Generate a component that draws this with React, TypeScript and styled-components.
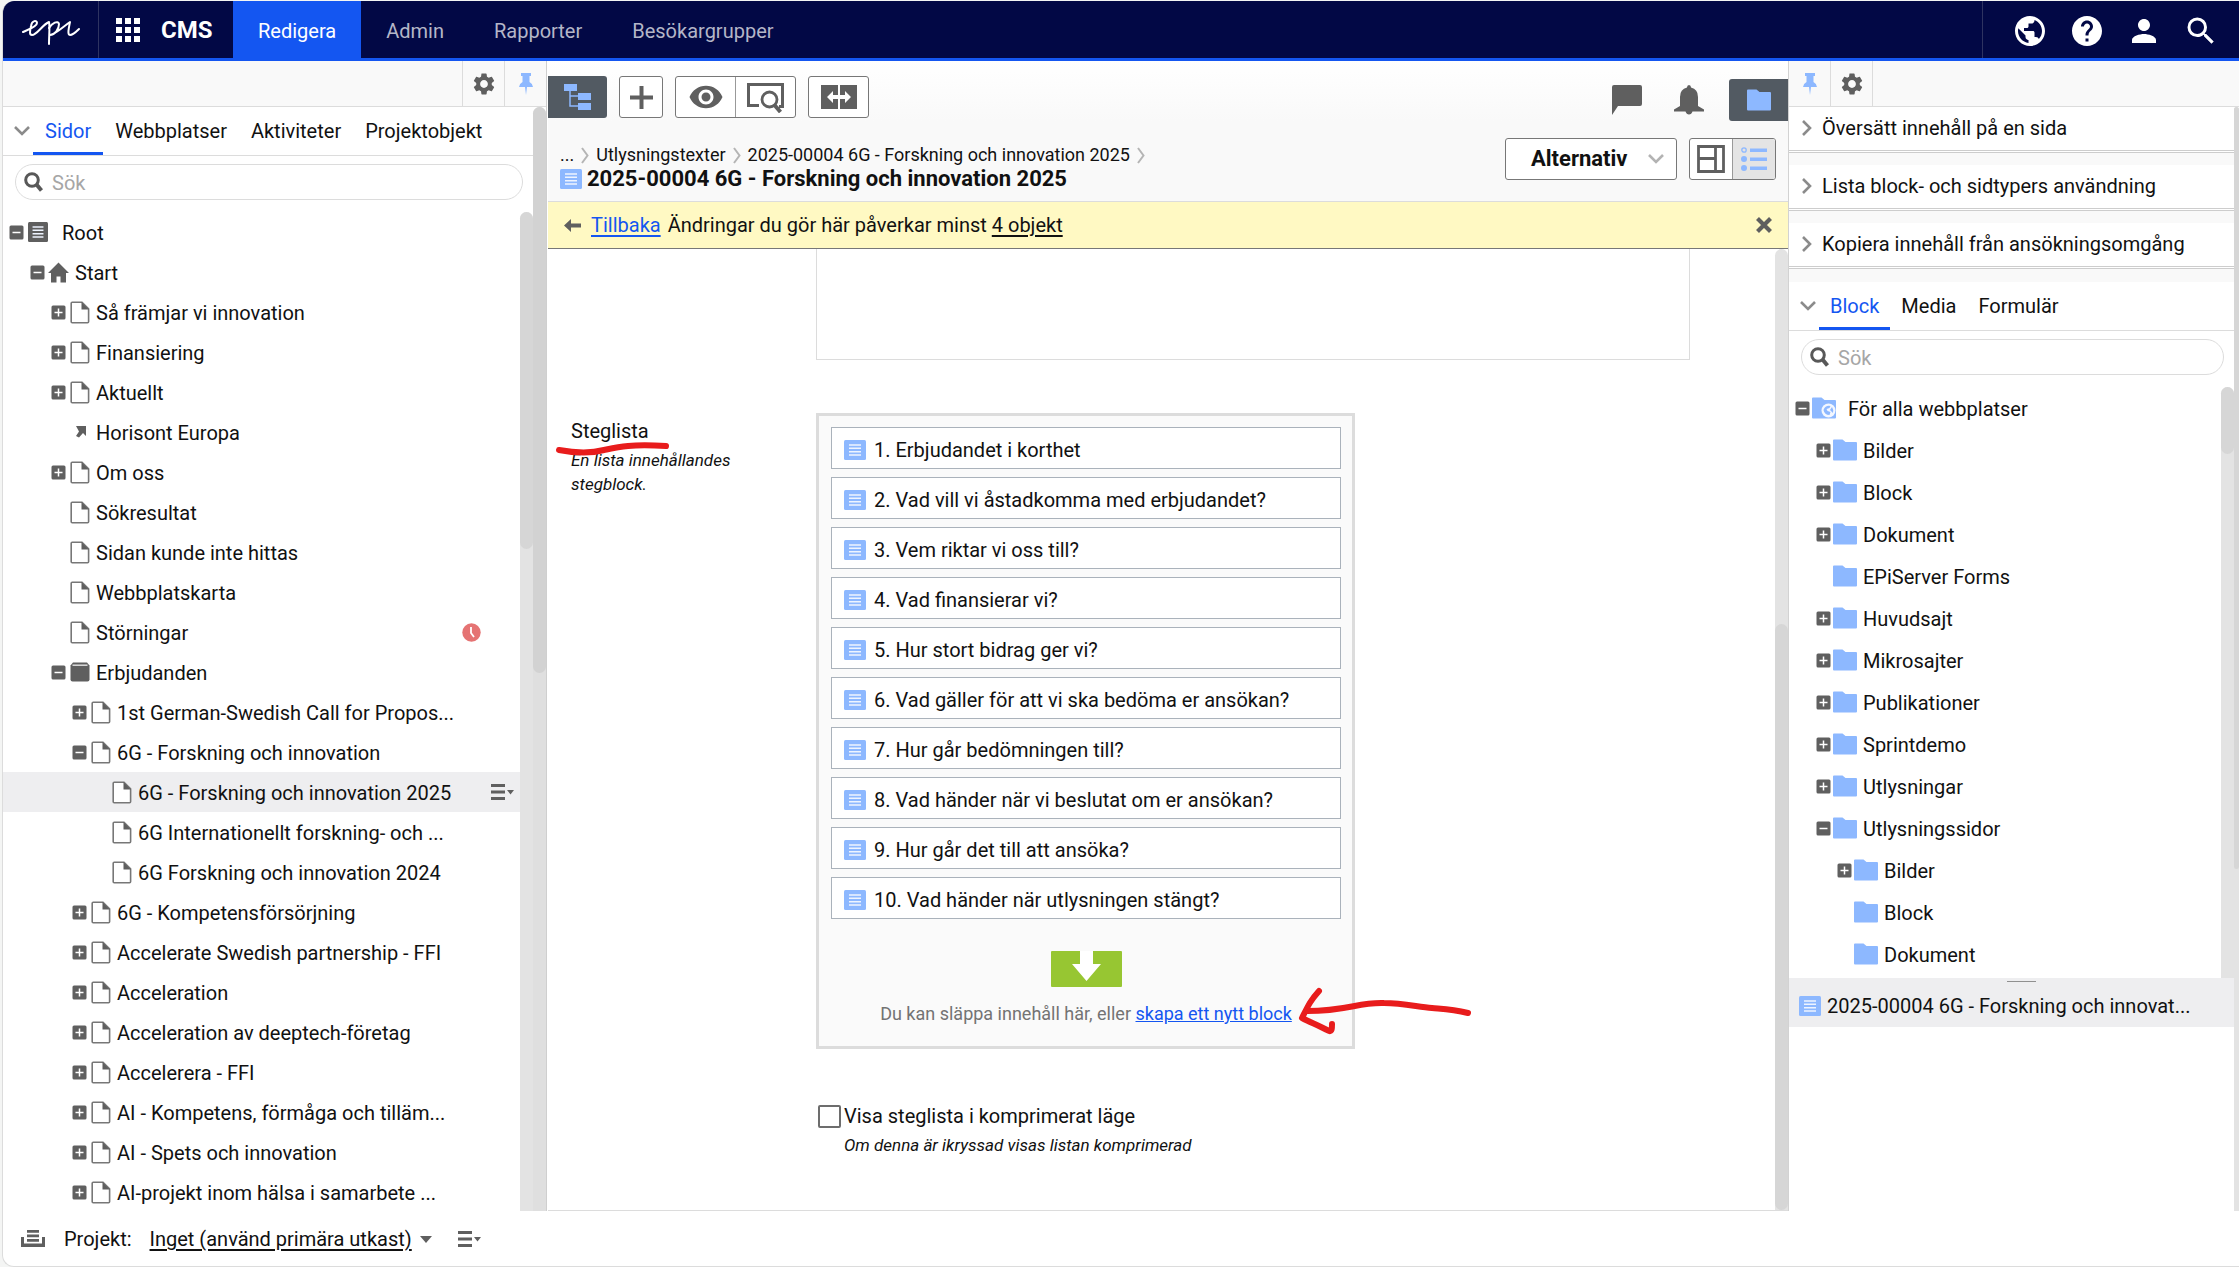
import React from "react";
import styled, { createGlobalStyle } from "styled-components";
import { MdApps, MdHelp, MdPerson, MdPublic, MdSearch, MdSettings, MdVisibility } from "react-icons/md";

const color = {
  navy: "#020845",
  blue: "#1456f1",
  sky: "#8db8ff",
  icon: "#5f5f5f",
  line: "#dcdcdc",
  slate: "#525a62",
  panel: "#f9f9f9",
  track: "#e3e3e3",
  thumb: "#d6d6d6",
  ink: "#e81c1c",
};

const GlobalStyle = createGlobalStyle`
  * { box-sizing: border-box; }
  body { margin: 0; background: #f4f5f4; color: #111; font: 20px/24px Roboto, "Liberation Sans", sans-serif; }
  button { font: inherit; color: inherit; background: none; border: 0; padding: 0; cursor: pointer; }
  ul, ol { list-style: none; margin: 0; padding: 0; }
  a { color: inherit; text-decoration: none; }
  h1, h2, p { margin: 0; font: inherit; }
  svg { display: block; flex: none; }
`;

const Frame = styled.div`
  display: flex;
  flex-direction: column;
  height: 100vh;
  padding: 1px 0 0 2px;
`;

const Shell = styled.div`
  display: flex;
  flex: 1;
  min-height: 0;
  flex-direction: column;
  background: #fff;
  border: 1px solid ${color.line};
  border-width: 0 0 1px 1px;
  border-radius: 12px 0 0 12px;
  overflow: hidden;
`;

const Header = styled.header`
  display: flex;
  flex: none;
  height: 60px;
  background: ${color.navy};
  border-bottom: 3px solid ${color.blue};
  color: #fff;
`;

const Brand = styled.a`
  display: flex;
  align-items: center;
  justify-content: center;
  width: 96px;
  padding-top: 6px;
  border-right: 1px solid #2e3361;
`;

const Product = styled.a`
  display: flex;
  align-items: center;
  gap: 15px;
  width: 134px;
  padding: 0 0 0 11px;
  font-size: 24px;
  font-weight: 700;
`;

const NavLink = styled.a<{ $active?: boolean }>`
  display: flex;
  align-items: center;
  padding: 3px 25px 0;
  color: ${(p) => (p.$active ? "#fff" : "#b4b6c8")};
  background: ${(p) => (p.$active ? color.blue : "transparent")};
`;

const Nav = styled.nav`
  display: flex;
`;

const HeaderTools = styled.div`
  display: flex;
  align-items: center;
  gap: 21px;
  margin-left: auto;
  padding: 2px 20px 0 29px;
  border-left: 1px solid #2e3361;
`;

const Body = styled.div`
  display: flex;
  flex: 1;
  min-height: 0;
`;

const Side = styled.aside<{ $right?: boolean }>`
  display: flex;
  flex: none;
  flex-direction: column;
  width: ${(p) => (p.$right ? 450 : 544)}px;
  border-right: ${(p) => (p.$right ? 0 : 1)}px solid #cfcfcf;
`;

const SideTools = styled.div<{ $right?: boolean }>`
  display: flex;
  flex: none;
  height: 46px;
  justify-content: ${(p) => (p.$right ? "flex-start" : "flex-end")};
  background: ${color.panel};
  border-bottom: 1px solid ${color.line};
`;

const SideTool = styled.button<{ $right?: boolean }>`
  display: flex;
  align-items: center;
  justify-content: center;
  width: 42px;
  padding-top: 1px;
  border: 0 solid ${color.line};
  border-width: ${(p) => (p.$right ? "0 1px 0 0" : "0 0 0 1px")};
`;

const SideBody = styled.div`
  display: flex;
  flex: 1;
  min-height: 0;
`;

const SideColumn = styled.div`
  display: flex;
  flex: 1;
  min-width: 0;
  flex-direction: column;
`;

const Tabs = styled.div`
  display: flex;
  flex: none;
  align-items: stretch;
  height: 49px;
  padding-left: 7px;
  border-bottom: 1px solid ${color.line};
`;

const Collapse = styled.button`
  width: 23px;
  display: flex;
  align-items: center;
  justify-content: center;
`;

const Tab = styled.button<{ $active?: boolean; $room: number }>`
  padding: 3px ${(p) => p.$room}px 0;
  color: ${(p) => (p.$active ? color.blue : "inherit")};
  border-bottom: 3px solid ${(p) => (p.$active ? color.blue : "transparent")};
`;

const SearchBox = styled.label`
  display: flex;
  flex: none;
  align-items: center;
  gap: 9px;
  height: 36px;
  margin: 8px 10px 12px 12px;
  padding: 0 9px 0 8px;
  border: 1px solid ${color.line};
  border-radius: 18px;
`;

const SearchInput = styled.input`
  flex: 1;
  min-width: 0;
  padding: 2px 0 0;
  border: 0;
  outline: 0;
  background: none;
  font: inherit;
  &::placeholder { color: #a6a6a6; opacity: 1; }
`;

const TreeArea = styled.div`
  display: flex;
  flex: 1;
  min-height: 0;
`;

const Tree = styled.ul`
  flex: 1;
  min-width: 0;
  overflow: hidden;
`;

const TreeRow = styled.li<{ $level: number; $tall?: boolean; $selected?: boolean }>`
  display: flex;
  align-items: center;
  height: ${(p) => (p.$tall ? 42 : 40)}px;
  padding-left: ${(p) => 6 + p.$level * 21}px;
  padding-right: 6px;
  background: ${(p) => (p.$selected ? "#eeeef0" : "transparent")};
`;

const Expander = styled.button`
  width: 15px;
  height: 15px;
  flex: none;
`;

const TreeIcon = styled.span`
  display: flex;
  align-items: center;
  justify-content: center;
  flex: none;
  width: 27px;
`;

const TreeLabel = styled.a<{ $root?: boolean; $gap: number }>`
  padding-left: ${(p) => (p.$root ? 11 : p.$gap)}px;
  padding-top: 1px;
  white-space: nowrap;
`;

const RowTail = styled.span`
  display: flex;
  margin-left: auto;
`;

const ClockTail = styled(RowTail)`
  padding-right: 33px;
`;

const Track = styled.div<{ $fill?: string }>`
  display: flex;
  flex: none;
  flex-direction: column;
  width: 13px;
  background: ${(p) => p.$fill ?? color.track};
  border-radius: 7px 7px 0 0;
`;

const Spacer = styled.i<{ $share: number }>`
  flex: ${(p) => p.$share} 0 0;
`;

const Thumb = styled.i<{ $share: number; $fill?: string }>`
  flex: ${(p) => p.$share} 0 0;
  background: ${(p) => p.$fill ?? color.thumb};
  border-radius: 7px;
`;

const EdgeTrack = styled(Track)`
  width: 5px;
`;

const Main = styled.main`
  display: flex;
  flex: 1;
  min-width: 0;
  flex-direction: column;
  margin-left: 1px;
  border-right: 1px solid #d2d2d2;
`;

const MainTop = styled.div`
  display: flex;
  flex: none;
  flex-direction: column;
  height: 141px;
  background: linear-gradient(#fff, #f9f9f9 60px);
  border-bottom: 1px solid ${color.line};
`;

const Toolbar = styled.div`
  display: flex;
  align-items: flex-start;
  gap: 12px;
  padding-top: 15px;
`;

const ToolGroup = styled.div`
  display: flex;
  height: 42px;
  background: #fff;
  border: 1px solid #777;
  border-radius: 3px;
  overflow: hidden;
`;

const Tool = styled.button<{ $width: number; $active?: boolean }>`
  display: flex;
  align-items: center;
  justify-content: center;
  width: ${(p) => p.$width}px;
  background: ${(p) => (p.$active ? "#e4e4e4" : "none")};
  & + & { border-left: 1px solid #999; }
`;

const PanelToggle = styled.button<{ $right?: boolean }>`
  display: flex;
  align-items: center;
  justify-content: center;
  width: 59px;
  height: 42px;
  background: ${color.slate};
  border-radius: ${(p) => (p.$right ? "3px 0 0 3px" : "0 3px 3px 0")};
`;

const ToolbarEnd = styled.div`
  display: flex;
  align-items: center;
  gap: 25px;
  margin-left: auto;
  padding-top: 3px;
`;

const IconButton = styled.button`
  display: flex;
  & + & { margin-left: 7px; }
`;

const TitleBar = styled.div`
  display: flex;
  align-items: flex-start;
  padding: 17px 12px 0 12px;
`;

const TitleBlock = styled.div`
  flex: 1;
  min-width: 0;
  padding-top: 5px;
`;

const Crumbs = styled.nav`
  display: flex;
  align-items: center;
  gap: 7px;
  height: 24px;
  font-size: 18px;
  white-space: nowrap;
`;

const Title = styled.h1`
  display: flex;
  align-items: center;
  gap: 5px;
  font-size: 22px;
  font-weight: 700;
  white-space: nowrap;
`;

const TitleActions = styled.div`
  display: flex;
  gap: 12px;
`;

const OptionsButton = styled.button`
  display: flex;
  align-items: center;
  justify-content: space-between;
  width: 172px;
  height: 42px;
  padding: 0 12px 0 25px;
  background: #fff;
  border: 1px solid #777;
  border-radius: 3px;
  font-size: 22px;
  font-weight: 700;
`;

const Notice = styled.div`
  display: flex;
  flex: none;
  align-items: center;
  height: 47px;
  padding: 0 16px;
  background: #fff9c3;
  border-bottom: 1px solid #777;
`;

const NoticeBack = styled.a`
  margin: 0 7px 0 10px;
  color: ${color.blue};
  text-decoration: underline;
  text-underline-offset: 3px;
`;

const Underlined = styled.a`
  text-decoration: underline;
  text-underline-offset: 3px;
`;

const CloseButton = styled.button`
  margin-left: auto;
`;

const Work = styled.div`
  display: flex;
  flex: 1;
  min-height: 0;
  border-bottom: 1px solid ${color.line};
`;

const Form = styled.form`
  flex: 1;
  min-width: 0;
  padding-left: 23px;
`;

const Field = styled.div<{ $top?: number }>`
  display: grid;
  grid-template-columns: 245px 1fr;
  padding-top: ${(p) => p.$top ?? 0}px;
`;

const LongText = styled.textarea`
  display: block;
  grid-column: 2;
  width: calc(100% - 85px);
  height: 111px;
  border: 1px solid ${color.line};
  border-top: 0;
  resize: none;
  outline: 0;
`;

const FieldLabel = styled.div`
  position: relative;
  padding-top: 6px;
`;

const Hint = styled.p`
  max-width: 180px;
  padding-top: 5px;
  font-size: 17px;
  font-style: italic;
`;

const DropArea = styled.div`
  position: relative;
  width: 539px;
  padding: 11px 11px 20px 12px;
  background: #fafafa;
  border: 3px solid ${color.line};
`;

const BlockList = styled.ol`
  display: grid;
  gap: 8px;
`;

const BlockItem = styled.li`
  display: flex;
  align-items: center;
  gap: 8px;
  height: 42px;
  padding: 4px 12px 0;
  background: #fff;
  border: 1px solid #aab2bb;
`;

const DropTarget = styled.div`
  display: flex;
  flex-direction: column;
  align-items: center;
  gap: 15px;
  padding-top: 32px;
  color: #737373;
  font-size: 18px;
`;

const CreateLink = styled.a`
  color: ${color.blue};
  text-decoration: underline;
`;

const UnderlineInk = styled.svg`
  position: absolute;
  left: -18px;
  top: 28px;
`;

const ArrowInk = styled.svg`
  position: absolute;
  left: 476px;
  top: 565px;
`;

const CheckRow = styled.div`
  display: flex;
  align-items: center;
  gap: 3px;
  grid-column: 2;
  padding-left: 2px;
`;

const CheckBox = styled.input`
  appearance: none;
  width: 23px;
  height: 23px;
  margin: 0;
  background: #fff;
  border: 2px solid #6d6d6d;
  border-radius: 2px;
`;

const CheckHint = styled(Hint)`
  grid-column: 2;
  max-width: none;
  padding-left: 28px;
`;

const Gadgets = styled.div`
  flex: none;
  padding-bottom: 1px;
  background: ${color.panel};
`;

const Gadget = styled.section`
  display: flex;
  align-items: center;
  height: 46px;
  margin-bottom: 12px;
  padding-left: 11px;
  padding-bottom: 1px;
  background: #fff;
  border-bottom: 3px double #cdcdcd;
`;

const GadgetToggle = styled.button`
  display: flex;
  align-items: center;
  gap: 10px;
  padding-left: 2px;
`;

const Pool = styled.div`
  flex: none;
  height: 49px;
  background: #eeeef0;
`;

const PoolHandle = styled.div`
  width: 29px;
  height: 4px;
  margin-left: calc(50% - 5px);
  border-bottom: 1px solid #909090;
`;

const PoolItem = styled.a`
  display: flex;
  align-items: center;
  gap: 6px;
  padding: 12px 10px 0;
`;

const PoolSpace = styled.div`
  flex: none;
  height: 184px;
`;

const Footer = styled.footer`
  display: flex;
  flex: none;
  align-items: center;
  height: 55px;
  padding-left: 18px;
`;

const FooterLabel = styled.span`
  padding: 1px 18px 0 19px;
`;

const ProjectButton = styled.button`
  display: flex;
  align-items: center;
  gap: 8px;
  padding-top: 1px;
  margin-right: 26px;
`;

/* ---------- Icons ---------- */

const EpiLogo = () => (
  <svg width="60" height="27" viewBox="0 0 60 27" fill="none" stroke="#fff" strokeWidth="2" strokeLinecap="round" strokeLinejoin="round">
    <path d="M2 13C6 11 16 8 16 4c0-3-5-3-6 3-1 5-2 9 1 9 5 0 10-10 17-13 1 4 0 14 0 22" />
    <path d="M28 9c3-5 9-8 10-4 0 5-4 11-9 11 6-1 14-9 20-13-1 5-3 13 0 13 3 0 6-3 9-6" />
  </svg>
);

const Toggler = ({ open }: { open: boolean }) => (
  <svg width="15" height="15" viewBox="0 0 15 15">
    <rect x="0.5" y="0.5" width="14" height="14" rx="1.5" fill={color.icon} />
    <path d={open ? "M3.5 7.5h8" : "M3.5 7.5h8M7.5 3.5v8"} stroke="#fff" strokeWidth="1.5" />
  </svg>
);

const PageIcon = () => (
  <svg width="20" height="23" viewBox="0 0 20 23">
    <path d="M1.2 2.2q0-1 1-1H12l6.6 6.6v13q0 1-1 1H2.2q-1 0-1-1z" fill="#fff" stroke="#777" strokeWidth="1.6" />
    <path d="M11.5 1v7.500H19z" fill={color.icon} />
  </svg>
);

const HomeIcon = () => (
  <svg width="21" height="21" viewBox="0 0 21 21">
    <path d="M10.500 0.500 21 11h-3v9.500h-5.500v-6h-4v6H3V11H0z" fill={color.icon} />
  </svg>
);

const CrateIcon = () => (
  <svg width="20" height="20" viewBox="0 0 20 20">
    <path d="M3 .5h14l2.500 3v14q0 2-2 2h-15q-2 0-2-2v-14z" fill={color.icon} />
    <path d="M2.500 3.200h15" stroke="#ddd" strokeWidth="1.500" />
  </svg>
);

const ShortcutIcon = () => (
  <svg width="14" height="14" viewBox="0 0 14 14">
    <path d="M3 1h10v10l-3-3-4 4.500-3-1.500L6 6.500z" fill={color.icon} />
  </svg>
);

const SheetIcon = ({ fill = color.sky, size = 22 }: { fill?: string; size?: number }) => (
  <svg width={size} height="20" viewBox="0 0 22 20" preserveAspectRatio="none">
    <rect width="22" height="20" rx="1.500" fill={fill} />
    <path d="M5 5h12M5 8.300h12M5 11.700h12M5 15h12" stroke="#eef4ff" strokeWidth="1.500" />
  </svg>
);

const FolderIcon = ({ globe }: { globe?: boolean }) => (
  <svg width="24" height="22" viewBox="0 0 24 22">
    <path d="M0 1.500q0-1 1-1h8.500l3 2.500H23q1 0 1 1v16.500q0 1-1 1H1q-1 0-1-1z" fill={color.sky} />
    {globe && (
      <g>
        <circle cx="16.500" cy="13.500" r="7" fill="#f3f7ff" />
        <path d="M11.500 13q2-5 7-4l-1 2-3 1 1 2 3 1-1 3q-5 0-6-5zM20 10q2 3 1 6l-3-3z" fill={color.sky} />
      </g>
    )}
  </svg>
);

const ClockIcon = () => (
  <svg width="19" height="19" viewBox="0 0 19 19">
    <circle cx="9.500" cy="9.500" r="9.200" fill="#e57373" />
    <path d="M9 4v6l3 4" fill="none" stroke="#fff" strokeWidth="1.800" />
  </svg>
);

const MenuCaretIcon = () => (
  <svg width="23" height="16" viewBox="0 0 23 16" fill={color.icon}>
    <path d="M0 0h14v3H0zM0 6.500h14v3H0zM0 13h14v3H0zM16 6h7l-3.500 4.500z" />
  </svg>
);

const PinIcon = () => (
  <svg width="14" height="22" viewBox="0 0 14 22" fill={color.sky}>
    <path d="M2 0h10v3h-1.500v6q3 1.500 3.500 5H8l-1 8-1-8H0q.5-3.500 3.500-5V3H2z" />
  </svg>
);

const Chevron = ({ down, fine, stroke = "#8b8b8b" }: { down?: boolean; fine?: boolean; stroke?: string }) =>
  fine ? (
    <svg width="8" height="17" viewBox="0 0 8 17" fill="none" stroke="#b5b5b5" strokeWidth="2">
      <path d="m1 1 5.500 7.500L1 16" />
    </svg>
  ) : down ? (
    <svg width="16" height="10" viewBox="0 0 16 10" fill="none" stroke={stroke} strokeWidth="2.600">
      <path d="m1 1 7 7 7-7" />
    </svg>
  ) : (
    <svg width="10" height="16" viewBox="0 0 10 16" fill="none" stroke={stroke} strokeWidth="2.600">
      <path d="m1 1 7 7-7 7" />
    </svg>
  );

const LensIcon = () => (
  <svg width="19" height="20" viewBox="0 0 19 20" fill="none" stroke="#585858">
    <circle cx="8" cy="8" r="6.300" strokeWidth="3" />
    <path d="m12.500 12.500 5 6" strokeWidth="4" />
  </svg>
);

const StructureIcon = () => (
  <svg width="28" height="26" viewBox="0 0 28 26">
    <path d="M6 5v17h9M6 12h9" fill="none" stroke={color.sky} strokeWidth="1.500" />
    <path d="M0 0h13v7H0zM14 9h13v7H14zM14 19h13v7H14z" fill={color.sky} />
  </svg>
);

const PlusIcon = () => (
  <svg width="23" height="23" viewBox="0 0 23 23" stroke={color.icon} strokeWidth="4">
    <path d="M11.500 0v23M0 11.500h23" />
  </svg>
);

const PreviewIcon = () => (
  <svg width="37" height="31" viewBox="0 0 37 31" fill="none" stroke={color.icon}>
    <path d="M12 23.500H1.500v-21h34v22H32" strokeWidth="3" />
    <circle cx="22.500" cy="17.500" r="7.500" strokeWidth="2.800" />
    <path d="m27.500 23 6 7" strokeWidth="4" />
  </svg>
);

const CompareIcon = () => (
  <svg width="36" height="24" viewBox="0 0 36 24">
    <path d="M0 0h17v24H0zM19 0h17v24H19z" fill={color.icon} />
    <path d="M6 12l6-6v4h5v4h-5v4zM30 12l-6-6v4h-5v4h5v4z" fill="#fff" />
  </svg>
);

const CommentIcon = () => (
  <svg width="30" height="30" viewBox="0 0 30 30" fill={color.icon}>
    <path d="M0 2q0-2 2-2h26q2 0 2 2v17q0 2-2 2H6l-6 9z" />
  </svg>
);

const BellIcon = () => (
  <svg width="30" height="30" viewBox="0 0 30 30" fill={color.icon}>
    <path d="M15 0q2 0 2 2.500 7 1.500 7 9.500v9l6 3.500v2H18.500q-1 3-3.500 3t-3.500-3H0v-2L6 21v-9q0-8 7-9.500Q13 0 15 0z" />
  </svg>
);

const LayoutIcon = () => (
  <svg width="28" height="28" viewBox="0 0 28 28" fill="none" stroke={color.icon} strokeWidth="2.800">
    <path d="M1.500 1.500h25v25h-25zM18.500 1v26M1 13.500h17" />
  </svg>
);

const FormViewIcon = () => (
  <svg width="26" height="26" viewBox="0 0 26 26" fill={color.sky}>
    <path d="M9 2.500h17v3.500H9zM9 11.500h17V15H9zM9 20.500h17V24H9z" />
    <circle cx="3" cy="4" r="2.200" fill="none" stroke={color.sky} strokeWidth="1.300" />
    <circle cx="3" cy="13" r="3" />
    <circle cx="3" cy="22" r="3" />
  </svg>
);

const BackIcon = () => (
  <svg width="17" height="13" viewBox="0 0 17 13" fill={color.icon}>
    <path d="M0 6.500 7 0v4.500h10v4H7V13z" />
  </svg>
);

const CloseIcon = () => (
  <svg width="16" height="16" viewBox="0 0 16 16" stroke={color.icon} strokeWidth="4.200">
    <path d="m1.500 1.500 13 13m0-13-13 13" />
  </svg>
);

const DropIcon = () => (
  <svg width="71" height="36" viewBox="0 0 71 36">
    <rect width="71" height="36" rx="1" fill="#97c632" />
    <path d="M29 0h13v13h8L35.500 30 21 13h8z" fill="#fff" />
  </svg>
);

const ProjectIcon = () => (
  <svg width="24" height="17" viewBox="0 0 24 17" fill={color.icon}>
    <path d="M6 0h12v2.800H6zM6 4.500h12v2.800H6zM6 9h12v2.800H6zM0 7h3v6.500h18V7h3v10H0z" />
  </svg>
);

const CaretIcon = () => (
  <svg width="12" height="7" viewBox="0 0 12 7" fill={color.icon}>
    <path d="M0 0h12L6 7z" />
  </svg>
);

/* ---------- Data ---------- */

type Kind = "sheet" | "home" | "page" | "link" | "crate" | "folder" | "globe";
type Node = { label: string; level: number; kind?: Kind; open?: boolean; mark?: "clock" | "menu" };

const pages: Node[] = [
  { label: "Root", level: 0, kind: "sheet", open: true },
  { label: "Start", level: 1, kind: "home", open: true },
  { label: "Så främjar vi innovation", level: 2, open: false },
  { label: "Finansiering", level: 2, open: false },
  { label: "Aktuellt", level: 2, open: false },
  { label: "Horisont Europa", level: 2, kind: "link" },
  { label: "Om oss", level: 2, open: false },
  { label: "Sökresultat", level: 2 },
  { label: "Sidan kunde inte hittas", level: 2 },
  { label: "Webbplatskarta", level: 2 },
  { label: "Störningar", level: 2, mark: "clock" },
  { label: "Erbjudanden", level: 2, kind: "crate", open: true },
  { label: "1st German-Swedish Call for Propos...", level: 3, open: false },
  { label: "6G - Forskning och innovation", level: 3, open: true },
  { label: "6G - Forskning och innovation 2025", level: 4, mark: "menu" },
  { label: "6G Internationellt forskning- och ...", level: 4 },
  { label: "6G Forskning och innovation 2024", level: 4 },
  { label: "6G - Kompetensförsörjning", level: 3, open: false },
  { label: "Accelerate Swedish partnership - FFI", level: 3, open: false },
  { label: "Acceleration", level: 3, open: false },
  { label: "Acceleration av deeptech-företag", level: 3, open: false },
  { label: "Accelerera - FFI", level: 3, open: false },
  { label: "AI - Kompetens, förmåga och tilläm...", level: 3, open: false },
  { label: "AI - Spets och innovation", level: 3, open: false },
  { label: "AI-projekt inom hälsa i samarbete ...", level: 3, open: false },
];

const folders: Node[] = [
  { label: "För alla webbplatser", level: 0, kind: "globe", open: true },
  ...["Bilder", "Block", "Dokument"].map((label) => ({ label, level: 1, kind: "folder" as Kind, open: false })),
  { label: "EPiServer Forms", level: 1, kind: "folder" },
  ...["Huvudsajt", "Mikrosajter", "Publikationer", "Sprintdemo", "Utlysningar"].map((label) => ({
    label,
    level: 1,
    kind: "folder" as Kind,
    open: false,
  })),
  { label: "Utlysningssidor", level: 1, kind: "folder", open: true },
  { label: "Bilder", level: 2, kind: "folder", open: false },
  { label: "Block", level: 2, kind: "folder" },
  { label: "Dokument", level: 2, kind: "folder" },
];

const steps = [
  "1. Erbjudandet i korthet",
  "2. Vad vill vi åstadkomma med erbjudandet?",
  "3. Vem riktar vi oss till?",
  "4. Vad finansierar vi?",
  "5. Hur stort bidrag ger vi?",
  "6. Vad gäller för att vi ska bedöma er ansökan?",
  "7. Hur går bedömningen till?",
  "8. Vad händer när vi beslutat om er ansökan?",
  "9. Hur går det till att ansöka?",
  "10. Vad händer när utlysningen stängt?",
];

const kindIcon: Record<Kind, React.ReactNode> = {
  sheet: <SheetIcon fill={color.icon} size={20} />,
  home: <HomeIcon />,
  page: <PageIcon />,
  link: <ShortcutIcon />,
  crate: <CrateIcon />,
  folder: <FolderIcon />,
  globe: <FolderIcon globe />,
};

/* ---------- Parts ---------- */

const ContentTree = ({ nodes, tall }: { nodes: Node[]; tall?: boolean }) => (
  <Tree>
    {nodes.map((n, i) => (
      <TreeRow key={i} $level={n.level} $tall={tall} $selected={n.mark === "menu"}>
        <Expander as={n.open === undefined ? "span" : "button"} aria-label={n.open === undefined ? undefined : n.open ? "Fäll ihop" : "Fäll ut"}>
          {n.open !== undefined && <Toggler open={n.open} />}
        </Expander>
        <TreeIcon>{kindIcon[n.kind ?? "page"]}</TreeIcon>
        <TreeLabel href="#" $root={n.level === 0} $gap={tall ? 5 : 3}>
          {n.label}
        </TreeLabel>
        {n.mark === "clock" && (
          <ClockTail>
            <ClockIcon />
          </ClockTail>
        )}
        {n.mark === "menu" && (
          <RowTail>
            <button aria-label="Meny">
              <MenuCaretIcon />
            </button>
          </RowTail>
        )}
      </TreeRow>
    ))}
  </Tree>
);

const TabStrip = ({ tabs, room }: { tabs: string[]; room: number }) => (
  <Tabs role="tablist">
    <Collapse aria-label="Fäll ihop">
      <Chevron down />
    </Collapse>
    {tabs.map((t, i) => (
      <Tab key={t} role="tab" $active={i === 0} $room={room}>
        {t}
      </Tab>
    ))}
  </Tabs>
);

const Search = () => (
  <SearchBox>
    <LensIcon />
    <SearchInput placeholder="Sök" aria-label="Sök" />
  </SearchBox>
);

export default function App() {
  return (
    <Frame>
      <GlobalStyle />
      <Shell>
        <Header>
          <Brand href="#" aria-label="Epi">
            <EpiLogo />
          </Brand>
          <Product href="#">
            <MdApps size={36} />
            CMS
          </Product>
          <Nav>
            <NavLink href="#" $active>Redigera</NavLink>
            <NavLink href="#">Admin</NavLink>
            <NavLink href="#">Rapporter</NavLink>
            <NavLink href="#">Besökargrupper</NavLink>
          </Nav>
          <HeaderTools>
            <button aria-label="Webbplatser"><MdPublic size={36} /></button>
            <button aria-label="Hjälp"><MdHelp size={36} /></button>
            <button aria-label="Användare"><MdPerson size={36} /></button>
            <button aria-label="Sök"><MdSearch size={36} /></button>
          </HeaderTools>
        </Header>

        <Body>
          <Side>
            <SideTools>
              <SideTool aria-label="Inställningar"><MdSettings size={26} color={color.icon} /></SideTool>
              <SideTool aria-label="Fäst"><PinIcon /></SideTool>
            </SideTools>
            <SideBody>
              <SideColumn>
                <TabStrip tabs={["Sidor", "Webbplatser", "Aktiviteter", "Projektobjekt"]} room={12} />
                <Search />
                <TreeArea>
                  <ContentTree nodes={pages} />
                  <Track>
                    <Thumb $share={337} />
                    <Spacer $share={661} />
                  </Track>
                </TreeArea>
              </SideColumn>
              <Track $fill="#dfdfdf">
                <Thumb $share={566} $fill="#d2d2d2" />
                <Spacer $share={538} />
              </Track>
            </SideBody>
          </Side>

          <Main>
            <MainTop>
              <Toolbar>
                <PanelToggle aria-label="Navigering"><StructureIcon /></PanelToggle>
                <ToolGroup>
                  <Tool $width={42} aria-label="Lägg till"><PlusIcon /></Tool>
                </ToolGroup>
                <ToolGroup>
                  <Tool $width={59} aria-label="Visa"><MdVisibility size={36} color={color.icon} /></Tool>
                  <Tool $width={60} aria-label="Förhandsgranska"><PreviewIcon /></Tool>
                </ToolGroup>
                <ToolGroup>
                  <Tool $width={59} aria-label="Jämför"><CompareIcon /></Tool>
                </ToolGroup>
                <ToolbarEnd>
                  <IconButton aria-label="Kommentarer"><CommentIcon /></IconButton>
                  <IconButton aria-label="Aviseringar"><BellIcon /></IconButton>
                  <PanelToggle $right aria-label="Resurser"><FolderIcon /></PanelToggle>
                </ToolbarEnd>
              </Toolbar>
              <TitleBar>
                <TitleBlock>
                  <Crumbs aria-label="Sökväg">
                    <span>...</span>
                    <Chevron fine />
                    <a href="#">Utlysningstexter</a>
                    <Chevron fine />
                    <a href="#">2025-00004 6G - Forskning och innovation 2025</a>
                    <Chevron fine />
                  </Crumbs>
                  <Title>
                    <SheetIcon />
                    2025-00004 6G - Forskning och innovation 2025
                  </Title>
                </TitleBlock>
                <TitleActions>
                  <OptionsButton aria-haspopup="menu">
                    Alternativ
                    <Chevron down stroke="#b3b3b3" />
                  </OptionsButton>
                  <ToolGroup>
                    <Tool $width={42} aria-label="Layoutvy"><LayoutIcon /></Tool>
                    <Tool $width={43} $active aria-label="Formulärvy"><FormViewIcon /></Tool>
                  </ToolGroup>
                </TitleActions>
              </TitleBar>
            </MainTop>
            <Notice>
              <BackIcon />
              <NoticeBack href="#">Tillbaka</NoticeBack>
              <span>
                Ändringar du gör här påverkar minst <Underlined href="#">4 objekt</Underlined>
              </span>
              <CloseButton aria-label="Stäng"><CloseIcon /></CloseButton>
            </Notice>
            <Work>
              <Form onSubmit={(e) => e.preventDefault()}>
                <Field>
                  <LongText aria-label="Text" />
                </Field>
                <Field $top={53}>
                  <FieldLabel>
                    <h2>Steglista</h2>
                    <Hint>En lista innehållandes stegblock.</Hint>
                    <UnderlineInk width="122" height="16" viewBox="0 0 122 16" fill="none" stroke={color.ink} strokeWidth="6" strokeLinecap="round" aria-hidden>
                      <path d="M6 9c16 3 30 4 45 0 14-3 25-6 62-4" />
                    </UnderlineInk>
                  </FieldLabel>
                  <DropArea>
                    <BlockList>
                      {steps.map((s) => (
                        <BlockItem key={s}>
                          <SheetIcon />
                          {s}
                        </BlockItem>
                      ))}
                    </BlockList>
                    <DropTarget>
                      <DropIcon />
                      <p>
                        Du kan släppa innehåll här, eller <CreateLink href="#">skapa ett nytt block</CreateLink>
                      </p>
                    </DropTarget>
                    <ArrowInk width="184" height="56" viewBox="0 0 184 56" fill="none" stroke={color.ink} strokeWidth="6" strokeLinecap="round" strokeLinejoin="round" aria-hidden>
                      <path d="M173 32c-16-4-24-4-36-5-14-1-28-5-48-5-26-1-36 8-77 8" />
                      <path d="M24 10C15 20 13 25 7 37c10 5 18 8 27 13 3 1 3-3 3-7" />
                    </ArrowInk>
                  </DropArea>
                </Field>
                <Field $top={55}>
                  <CheckRow>
                    <CheckBox type="checkbox" id="compact" />
                    <label htmlFor="compact">Visa steglista i komprimerat läge</label>
                  </CheckRow>
                  <CheckHint>Om denna är ikryssad visas listan komprimerad</CheckHint>
                </Field>
              </Form>
              <Track>
                <Spacer $share={375} />
                <Thumb $share={586} />
              </Track>
            </Work>
          </Main>

          <Side $right>
            <SideTools $right>
              <SideTool $right aria-label="Fäst"><PinIcon /></SideTool>
              <SideTool $right aria-label="Inställningar"><MdSettings size={26} color={color.icon} /></SideTool>
            </SideTools>
            <SideBody>
              <SideColumn>
                <Gadgets>
                  {["Översätt innehåll på en sida", "Lista block- och sidtypers användning", "Kopiera innehåll från ansökningsomgång"].map((g) => (
                    <Gadget key={g}>
                      <GadgetToggle>
                        <Chevron />
                        {g}
                      </GadgetToggle>
                    </Gadget>
                  ))}
                </Gadgets>
                <TabStrip tabs={["Block", "Media", "Formulär"]} room={11} />
                <Search />
                <TreeArea>
                  <ContentTree nodes={folders} tall />
                  <Track>
                    <Thumb $share={67} />
                    <Spacer $share={523} />
                  </Track>
                </TreeArea>
                <Pool>
                  <PoolHandle />
                  <PoolItem href="#">
                    <SheetIcon />
                    2025-00004 6G - Forskning och innovat...
                  </PoolItem>
                </Pool>
                <PoolSpace />
              </SideColumn>
              <EdgeTrack>
                <Thumb $share={762} />
                <Spacer $share={342} />
              </EdgeTrack>
            </SideBody>
          </Side>
        </Body>

        <Footer>
          <ProjectIcon />
          <FooterLabel>Projekt:</FooterLabel>
          <ProjectButton aria-haspopup="menu">
            <Underlined as="span">Inget (använd primära utkast)</Underlined>
            <CaretIcon />
          </ProjectButton>
          <button aria-label="Meny"><MenuCaretIcon /></button>
        </Footer>
      </Shell>
    </Frame>
  );
}
